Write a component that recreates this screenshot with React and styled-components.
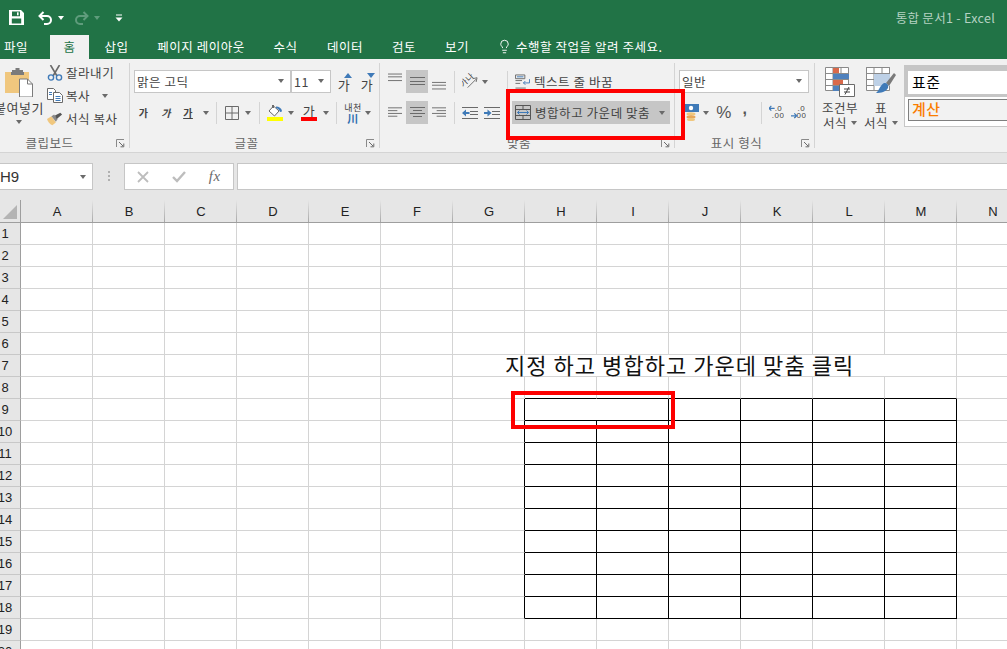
import React from "react";
import styled, { createGlobalStyle } from "styled-components";
import { Lightbulb } from "lucide-react";

const GlobalStyle = createGlobalStyle`
  html, body { margin: 0; padding: 0; height: 100%; overflow: hidden; background: #fff; }
  #root { height: 100%; }
  * { box-sizing: border-box; }
`;

const Page = styled.div`
  position: relative;
  width: 1007px;
  height: 649px;
  overflow: hidden;
  font-family: "Noto Sans CJK KR", "Liberation Sans", sans-serif;
  font-size: 12px;
  letter-spacing: 0.55px;
  color: #444;
`;

/* title bar + tabs */
const TitleBar = styled.header`
  display: flex;
  align-items: center;
  height: 35px;
  padding: 0 12px 0 9px;
  background: #217346;
  color: #fff;
`;
const Qat = styled.div`
  display: flex;
  align-items: center;
  flex: 1;
`;
const QatSlot = styled.span`
  display: flex;
  align-items: center;
  justify-content: center;
  flex: none;
  width: ${(p) => p.$w}px;
  margin-left: ${(p) => p.$ml || 0}px;
`;
const Title = styled.div`
  color: #b5d2c2;
  font-size: 12.5px;
  letter-spacing: 0.3px;
`;
const TabBar = styled.nav`
  display: flex;
  height: 24px;
  background: #217346;
`;
const Tab = styled.div`
  display: flex;
  align-items: center;
  justify-content: center;
  flex: none;
  width: ${(p) => p.$w}px;
  margin-left: ${(p) => p.$ml || 0}px;
  padding-bottom: 2px;
  font-size: 12.5px;
  color: ${(p) => (p.$active ? "#217346" : "#fff")};
  background: ${(p) => (p.$active ? "#f1f1f1" : "transparent")};
`;
const TellMe = styled.div`
  display: flex;
  align-items: center;
  gap: 4px;
  margin-left: 14px;
  padding-bottom: 2px;
  color: #fff;
  font-size: 12.5px;
`;

/* ribbon */
const Ribbon = styled.div`
  display: flex;
  height: 94px;
  padding-top: 4px;
  background: #f1f1f1;
  border-bottom: 1px solid #d4d4d4;
`;
const Group = styled.section`
  position: relative;
  display: flex;
  flex-direction: column;
  flex: none;
  width: ${(p) => p.$w}px;
  height: 85px;
  border-right: ${(p) => (p.$last ? "none" : "1px solid #d4d4d4")};
`;
const GroupBody = styled.div`
  flex: 1;
  min-height: 0;
  display: ${(p) => (p.$row ? "flex" : "block")};
  padding-top: ${(p) => (p.$row ? 0 : 7)}px;
`;
const GroupLabel = styled.div`
  height: 15px;
  margin-bottom: -2px;
  line-height: 15px;
  text-align: center;
  color: #666;
  font-size: 12.5px;
  padding-right: ${(p) => p.$pr ?? 16}px;
`;
const Launcher = styled.svg`
  position: absolute;
  right: 4px;
  bottom: 0;
`;
const Row = styled.div`
  display: flex;
  align-items: center;
  height: 23px;
  margin-bottom: 8px;
`;
const Slot = styled.span`
  display: flex;
  align-items: center;
  justify-content: center;
  flex: none;
  height: 100%;
  width: ${(p) => p.$w}px;
  margin-left: ${(p) => p.$ml || 0}px;
  background: ${(p) => (p.$on ? "#c6c6c6" : "transparent")};
  color: #444;
`;
const Sep = styled.span`
  flex: none;
  width: 1px;
  height: 22px;
  margin-left: ${(p) => p.$ml || 0}px;
  background: #d4d4d4;
`;
const Caret = styled.i`
  display: inline-block;
  flex: none;
  width: 0;
  height: 0;
  margin-left: ${(p) => p.$ml || 0}px;
  border-left: 3.5px solid transparent;
  border-right: 3.5px solid transparent;
  border-top: 4px solid ${(p) => p.$color || "#6a6a6a"};
`;
const Select = styled.div`
  display: flex;
  align-items: center;
  justify-content: space-between;
  flex: none;
  width: ${(p) => p.$w}px;
  height: 23px;
  margin-left: ${(p) => p.$ml || 0}px;
  padding: 0 6px 1px 2px;
  background: #fff;
  border: 1px solid #c6c6c6;
  color: #444;
  font-size: 12.5px;
`;

/* clipboard group */
const PasteCol = styled.div`
  display: flex;
  flex-direction: column;
  align-items: center;
  flex: none;
  width: 38px;
  padding-top: 5px;
`;
const PasteLabel = styled.div`
  margin-top: 3px;
  height: 15px;
  line-height: 15px;
  white-space: nowrap;
  font-size: 13px;
`;
const PasteCaret = styled.div`
  display: flex;
  margin-top: 5px;
`;
const SmallCol = styled.div`
  margin: -2px 0 0 9px;
`;
const SmallRow = styled.div`
  display: flex;
  align-items: center;
  height: 23px;
  gap: 3px;
  font-size: 12.5px;
  white-space: nowrap;
`;
const SmallIcon = styled.span`
  display: flex;
  justify-content: center;
  flex: none;
  width: 16px;
`;

/* font group */
const Ga = styled.span`
  font-size: ${(p) => p.$size || 10}px;
  font-weight: ${(p) => (p.$bold ? 700 : 400)};
  font-style: ${(p) => (p.$italic ? "italic" : "normal")};
  text-decoration: ${(p) => (p.$under ? "underline" : "none")};
  line-height: 1;
`;
const GrowWrap = styled.span`
  position: relative;
  display: flex;
  font-size: 13px;
  line-height: 1;
  padding-top: 5px;
`;
const GrowMark = styled.svg`
  position: absolute;
  top: 0;
  right: -2px;
`;
const ColorWrap = styled.span`
  display: flex;
  flex-direction: column;
  align-items: center;
  width: 16px;
`;
const ColorBar = styled.span`
  display: block;
  width: 16px;
  height: 4px;
  background: ${(p) => p.$color};
`;
const ColorGa = styled.span`
  font-size: 13px;
  line-height: 12px;
  height: 12px;
`;
const Phonetic = styled.span`
  display: flex;
  flex-direction: column;
  align-items: center;
  font-size: 9px;
  line-height: 10px;
`;
const PhoneticMark = styled.span`
  color: #2f6fb0;
  font-size: 11px;
  font-weight: 700;
  line-height: 10px;
`;

/* alignment group */
const WrapLabel = styled.span`
  margin-left: 4px;
  padding-bottom: 1px;
  font-size: 12.5px;
  white-space: nowrap;
`;
const MergeButton = styled.div`
  display: flex;
  align-items: center;
  flex: none;
  width: 158px;
  height: 23px;
  margin-left: 12px;
  padding-left: 3px;
  background: #c6c6c6;
  font-size: 12.5px;
  white-space: nowrap;
`;
const MergeText = styled.span`
  margin-left: 4px;
  flex: 1;
`;
const MergeCaret = styled.span`
  display: flex;
  margin-right: 5px;
`;

/* number group */
const Symbol = styled.span`
  font-family: "Liberation Sans", sans-serif;
  font-weight: ${(p) => p.$weight || 400};
  font-size: ${(p) => p.$size || 16}px;
  line-height: 1;
  padding-bottom: ${(p) => p.$pb || 0}px;
  color: #555;
`;

/* styles group */
const BigButton = styled.div`
  display: flex;
  flex-direction: column;
  align-items: center;
  flex: none;
  width: 40px;
  margin-left: ${(p) => p.$ml || 0}px;
  padding-top: 4px;
`;
const BigLabel = styled.div`
  display: flex;
  align-items: center;
  gap: 4px;
  height: 15px;
  line-height: 15px;
  font-size: 12.5px;
  white-space: nowrap;
  margin-top: ${(p) => p.$mt || 0}px;
`;
const Gallery = styled.div`
  flex: 1;
  height: 62px;
  margin: 2px 0 0 3px;
  background: #fff;
  border: 1px solid #c6c6c6;
  border-right: none;
`;
const StyleNormal = styled.div`
  display: flex;
  align-items: center;
  height: 31px;
  padding: 0 0 3px 4px;
  background: #fff;
  border: solid #c6c6c6;
  border-width: 5px 0 3px 3px;
  font-size: 15px;
  color: #000;
`;
const StyleCalc = styled.div`
  display: flex;
  align-items: center;
  height: 22px;
  margin: 2px 0 0 3px;
  padding: 0 0 3px 3px;
  background: #f2f2f2;
  border: 1px solid #7f7f7f;
  border-right: none;
  font-size: 15px;
  font-weight: 500;
  color: #fa7d00;
`;

/* formula bar */
const FormulaBar = styled.div`
  display: flex;
  align-items: flex-start;
  height: 47px;
  padding-top: 10px;
  background: #e6e6e6;
`;
const NameBox = styled.div`
  display: flex;
  align-items: center;
  justify-content: space-between;
  flex: none;
  width: 94px;
  height: 27px;
  margin-left: -1px;
  padding: 0 6px 0 0;
  background: #fff;
  border: 1px solid #c6c6c6;
  font-family: "Liberation Sans", sans-serif;
  font-size: 15px;
  letter-spacing: 0;
  color: #333;
`;
const Dots = styled.span`
  display: flex;
  flex-direction: column;
  gap: 2px;
  flex: none;
  margin: 8px 14px 0 15px;
  i {
    display: block;
    width: 2px;
    height: 2px;
    background: #b0b0b0;
  }
`;
const FxBox = styled.div`
  display: flex;
  align-items: center;
  justify-content: space-around;
  flex: none;
  width: 110px;
  height: 27px;
  background: #fff;
  border: 1px solid #c6c6c6;
  padding: 0 1px;
`;
const FxMark = styled.span`
  font-family: "Liberation Serif", serif;
  font-style: italic;
  font-size: 15px;
  color: #6a6a6a;
`;
const FormulaInput = styled.div`
  flex: 1;
  height: 27px;
  margin-left: 3px;
  background: #fff;
  border: 1px solid #c6c6c6;
  border-right: none;
`;

/* sheet */
const Sheet = styled.div`
  display: grid;
  grid-template-columns: 21px repeat(14, 72px);
  grid-template-rows: 23px;
  grid-auto-rows: 22px;
  height: 449px;
  overflow: hidden;
  background: #fff;
  font-family: "Liberation Sans", sans-serif;
  font-size: 13px;
  letter-spacing: 0;
  color: #222;
`;
const Corner = styled.div`
  display: flex;
  align-items: flex-end;
  padding: 0 0 3px 3px;
  background: #e6e6e6;
  border-right: 1px solid #9e9e9e;
  border-bottom: 1px solid #9e9e9e;
`;
const ColHead = styled.div`
  display: flex;
  align-items: center;
  justify-content: center;
  background: linear-gradient(to bottom, #e6e6e6, #a8a8a8) right / 1px 100% no-repeat #e6e6e6;
  border-bottom: 1px solid #9e9e9e;
`;
const RowHead = styled.div`
  display: flex;
  align-items: center;
  justify-content: center;
  padding-right: 10px;
  background: #e6e6e6;
  border-right: 1px solid #9e9e9e;
  border-bottom: 1px solid #c8c8c8;
`;
const Cell = styled.div`
  grid-column: span ${(p) => p.$span || 1};
  border-right: 1px solid ${(p) => (p.$blackRight ? "#000" : "#d4d4d4")};
  border-bottom: 1px solid ${(p) => (p.$blackBottom ? "#000" : "#d4d4d4")};
`;
const NoteCell = styled(Cell)`
  display: flex;
  align-items: center;
  padding: 0 0 3px 52px;
  font-family: "Noto Sans CJK KR", sans-serif;
  font-size: 22px;
  letter-spacing: 1.05px;
  color: #111;
  white-space: nowrap;
  overflow: visible;
`;

/* red annotation boxes drawn over the capture */
const Callout = styled.div`
  position: absolute;
  left: ${(p) => p.$x}px;
  top: ${(p) => p.$y}px;
  width: ${(p) => p.$w}px;
  height: ${(p) => p.$h}px;
  border: 4px solid #fe0000;
  pointer-events: none;
`;

/* icons */
const GRAY = "#6a6a6a";
const BLUE = "#3f7ab8";

const SaveIcon = () => (
  <svg width="15" height="15" viewBox="0 0 15 15">
    <path fill="#fff" fillRule="evenodd" d="M0 0h12l3 3v12H0zM3 1.6v4.6h8V1.6zM2.8 8.6v4.8h9.4V8.6z" />
    <rect x="8" y="2.3" width="1.6" height="3" fill="#fff" />
  </svg>
);
const UndoIcon = ({ color = "#fff", flip }) => (
  <svg width="15" height="14" viewBox="0 0 15 14" style={flip ? { transform: "scaleX(-1)" } : undefined}>
    <path d="M5.5 1 1.5 5l4 4M1.5 5H9a4 4 0 0 1 0 8H6" fill="none" stroke={color} strokeWidth="2" />
  </svg>
);
const QatMenuIcon = () => (
  <svg width="8" height="8" viewBox="0 0 8 8">
    <path d="M1 1h6" stroke="#fff" strokeWidth="1" />
    <path d="M0.5 3.5h7L4 7.5z" fill="#fff" />
  </svg>
);
const LauncherIcon = () => (
  <Launcher width="9" height="9" viewBox="0 0 9 9">
    <path d="M0.5 8V0.5H8" fill="none" stroke="#8a8a8a" />
    <path d="M3 3l4 4M7.8 4.5v3.3H4.5" fill="none" stroke="#6a6a6a" />
  </Launcher>
);
const PasteIcon = () => (
  <svg width="28" height="29" viewBox="0 0 28 29">
    <path d="M0 4h24v21H0z" fill="#f0c77e" />
    <path d="M7 4V2h3.5V0h4v2H18v2h1v3H6V4z" fill="#7b7b7b" />
    <path d="M14.5 11h8l5 5v13h-13z" fill="#fff" stroke="#7b7b7b" />
    <path d="M22.5 11v5h5" fill="none" stroke="#7b7b7b" />
  </svg>
);
const CutIcon = () => (
  <svg width="16" height="16" viewBox="0 0 16 16">
    <path d="M3.5 0l6.5 11M12.5 0 6 11" stroke="#6a6a6a" strokeWidth="1.6" fill="none" />
    <circle cx="4" cy="12.5" r="2.6" fill="none" stroke={BLUE} strokeWidth="1.4" />
    <circle cx="12" cy="12.5" r="2.6" fill="none" stroke={BLUE} strokeWidth="1.4" />
  </svg>
);
const CopyIcon = () => (
  <svg width="16" height="15" viewBox="0 0 16 15">
    <path d="M.5.5h6l2 2v9H.5z" fill="#fff" stroke="#6a6a6a" />
    <path d="M6.5 4.5h6l3 3v7h-9z" fill="#fff" stroke="#6a6a6a" />
    <path d="M8.5 8.5h5M8.5 10.5h5M8.5 12.5h5M2 4.5h3M2 6.5h3" stroke={BLUE} />
  </svg>
);
const PainterIcon = () => (
  <svg width="18" height="14" viewBox="0 0 18 14">
    <path d="M0 7l5-3 5 7-4 3C3 13 1 10 0 7z" fill="#f0c77e" />
    <path d="M5 4l3-2 4 5-2 3z" fill="#8a8a8a" />
    <path d="M9 3l6-3 2 2-6 5z" fill="#555" />
  </svg>
);
const BorderIcon = () => (
  <svg width="14" height="14" viewBox="0 0 14 14">
    <path d="M.5.5h13v13H.5zM7 .5v13M.5 7h13" fill="none" stroke={GRAY} />
  </svg>
);
const FillIcon = () => (
  <svg width="16" height="12" viewBox="0 0 16 12">
    <path d="M6.5 1 12 6l-4.5 5L2 6z" fill="#fff" stroke={GRAY} />
    <path d="M5 0h2v3H5z" fill={GRAY} />
    <path d="M9 1.5c3 .2 5.5 1.5 6 4.500-.6 1.300-2 1.300-2.500 0C12 4.500 11 3.500 9 3.200z" fill={BLUE} />
  </svg>
);
const GrowArrow = ({ down }) => (
  <GrowMark width="8" height="5" viewBox="0 0 8 5">
    <path d={down ? "M0 0h8L4 5z" : "M4 0l4 5H0z"} fill={BLUE} />
  </GrowMark>
);
// lines are placed from the top of the 23px ribbon row
const Lines = ({ rows }) => (
  <svg width="15" height="23" viewBox="0 0 15 23">
    {rows.map(([x1, x2, y]) => (
      <path key={y} d={`M${x1} ${y + 0.5}H${x2}`} stroke={GRAY} />
    ))}
  </svg>
);
const vTop = [[0, 15, 3], [0, 15, 6], [0, 15, 10]];
const vMid = [[0, 15, 7], [0, 15, 11], [0, 15, 14]];
const vBot = [[0, 15, 12], [0, 15, 15], [0, 15, 19]];
const hLeft = [[0, 15, 6], [0, 10, 9], [0, 15, 12], [0, 10, 15]];
const hCenter = [[0, 15, 6], [3, 12, 9], [0, 15, 12], [3, 12, 15]];
const hRight = [[0, 15, 6], [5, 15, 9], [0, 15, 12], [5, 15, 15]];
const OrientIcon = () => (
  <svg width="17" height="17" viewBox="0 0 17 17">
    <text x="-1" y="11" fontSize="8.5" fill="#333" transform="rotate(-45 5 10)">가나</text>
    <path d="M6 15 15 6M11.500 5.500 16 4.500 15 9" fill="none" stroke={GRAY} />
  </svg>
);
const IndentIcon = ({ right }) => (
  <svg width="16" height="14" viewBox="0 0 16 14">
    <path d="M0 1.500h16M8 5.500h8M8 8.500h8M0 12.500h16" stroke={GRAY} />
    <path d={right ? "M0 6h3.500V3.500L7.500 7l-4 3.500V8H0z" : "M7.500 6H4V3.500L0 7l4 3.500V8h3.500z"} fill={BLUE} />
  </svg>
);
const WrapIcon = () => (
  <svg width="16" height="15" viewBox="0 0 16 15">
    <path d="M.5.5h10v4H.5zM.5 6.500h7M.5 9.500h5M.5 14.500h11" fill="none" stroke={GRAY} />
    <path d="M2 2.500h7" stroke={BLUE} />
    <path d="M15.500 5v4H9M11 7 9 9l2 2" fill="none" stroke={BLUE} />
  </svg>
);
const MergeIcon = () => (
  <svg width="16" height="15" viewBox="0 0 16 15">
    <path d="M.5.500h15v14H.5zM.5 4.500h15M.5 10.500h15M8 .5v4M8 10.500v4" fill="none" stroke="#555" />
    <path d="M2.500 7.500h11M4.500 5.500l-2 2 2 2M11.500 5.500l2 2-2 2" fill="none" stroke={BLUE} />
  </svg>
);
const AccountingIcon = () => (
  <svg width="15" height="17" viewBox="0 0 15 17">
    <path d="M0 0h15v8H0z" fill={BLUE} />
    <circle cx="7" cy="4" r="2.200" fill="#fff" />
    <ellipse cx="7" cy="10" rx="4.500" ry="1.700" fill="#f0c77e" />
    <ellipse cx="7" cy="13" rx="4.500" ry="1.700" fill="#e8a85a" />
    <ellipse cx="7" cy="15.500" rx="4" ry="1.500" fill="#f0c77e" />
  </svg>
);
const DecimalIcon = ({ more }) => (
  <svg width="16" height="15" viewBox="0 0 16 15">
    <text x={more ? 6 : 3} y={more ? 6 : 13} fontSize="8.500" fill="#444" fontFamily="Liberation Sans">{more ? ".0" : ".00"}</text>
    <text x={more ? 3 : 7} y={more ? 13 : 6} fontSize="8.500" fill="#444" fontFamily="Liberation Sans">{more ? ".00" : ".0"}</text>
    <path d={more ? "M6 3H0M2.500.5 0 3l2.500 2.500" : "M0 11h6M3.500 8.500 6 11l-2.500 2.500"} fill="none" stroke={BLUE} strokeWidth="1.300" />
  </svg>
);
const gridPath = "M.5.500h23v23H.5zM.5 6.500h23M.5 12.500h23M.5 18.500h23M8 .5v23M16 .5v23";
const CondIcon = () => (
  <svg width="30" height="30" viewBox="0 0 30 30">
    <path d={gridPath} fill="#fff" stroke="#8a8a8a" />
    <path d="M8 1h6v5H8z" fill="#d9694a" />
    <path d="M8 7h16v5H8z" fill="#4f81bd" />
    <path d="M8 13h10v5H8z" fill="#d9694a" />
    <path d="M8 19h6v5H8z" fill="#4f81bd" />
    <path d="M14.500 17.500h15v12h-15z" fill="#fff" stroke="#6a6a6a" />
    <path d="M19 22h6M19 25h6M24 20l-4 7.500" fill="none" stroke="#444" />
  </svg>
);
const TableStyleIcon = () => (
  <svg width="30" height="30" viewBox="0 0 30 30">
    <path d={gridPath} fill="#fff" stroke="#8a8a8a" />
    <path d="M8 7h16v12H8z" fill="#bdd0e6" />
    <path d="M.5.500h23v6H.5z" fill="none" stroke="#8a8a8a" />
    <path d="M20 16 28 6l2 2-7 11z" fill="#7a7a7a" />
    <path d="M18 16c3 0 5 2 4 5-2 4-7 5-12 5 3-2 4-8 8-10z" fill={BLUE} />
  </svg>
);
const CornerMark = () => (
  <svg width="14" height="14" viewBox="0 0 14 14">
    <path d="M14 0v14H0z" fill="#b4b4b4" />
  </svg>
);
const CancelIcon = () => (
  <svg width="12" height="12" viewBox="0 0 12 12">
    <path d="M1 1l10 10M11 1 1 11" stroke="#bdbdbd" strokeWidth="1.800" />
  </svg>
);
const CheckIcon = () => (
  <svg width="14" height="12" viewBox="0 0 14 12">
    <path d="M1 6l4 4 8-9" fill="none" stroke="#bdbdbd" strokeWidth="2.400" />
  </svg>
);

const COLUMNS = "ABCDEFGHIJKLMN".split("");
const ROWS = Array.from({ length: 20 }, (_, i) => i + 1);
const G = 6;
const H = 7;
const M = 12;
const NOTE = "지정 하고 병합하고 가운데 맞춤 클릭";

function renderRow(row) {
  const cells = [];
  COLUMNS.forEach((_, col) => {
    // the note in row 7 runs over its neighbours, H9:I9 is merged
    if (row === 7 && col > G && col <= M) return;
    if (row === 9 && col === H + 1) return;
    if (row === 7 && col === G) {
      cells.push(<NoteCell key={col} $span={7}>{NOTE}</NoteCell>);
      return;
    }
    const inRows = row >= 9 && row <= 18;
    cells.push(
      <Cell
        key={col}
        $span={row === 9 && col === H ? 2 : 1}
        $blackRight={inRows && col >= G && col <= M}
        $blackBottom={row >= 8 && row <= 18 && col >= H && col <= M}
      />
    );
  });
  return cells;
}

export default function App() {
  return (
    <Page>
      <GlobalStyle />
      <TitleBar>
        <Qat>
          <SaveIcon />
          <QatSlot $w={15} $ml={14}><UndoIcon /></QatSlot>
          <QatSlot $w={8} $ml={4}><Caret $color="#fff" /></QatSlot>
          <QatSlot $w={15} $ml={9}><UndoIcon color="#5f9c7c" flip /></QatSlot>
          <QatSlot $w={8} $ml={4}><Caret $color="#5f9c7c" /></QatSlot>
          <QatSlot $w={8} $ml={14}><QatMenuIcon /></QatSlot>
        </Qat>
        <Title>통합 문서1 - Excel</Title>
      </TitleBar>
      <TabBar>
        <Tab $w={32}>파일</Tab>
        <Tab $w={39} $ml={18} $active>홈</Tab>
        <Tab $w={55}>삽입</Tab>
        <Tab $w={114}>페이지 레이아웃</Tab>
        <Tab $w={55}>수식</Tab>
        <Tab $w={64}>데이터</Tab>
        <Tab $w={54}>검토</Tab>
        <Tab $w={52}>보기</Tab>
        <TellMe>
          <Lightbulb size={15} strokeWidth={1.5} />
          수행할 작업을 알려 주세요.
        </TellMe>
      </TabBar>

      <Ribbon>
        <Group $w={130}>
          <GroupBody $row>
            <PasteCol>
              <PasteIcon />
              <PasteLabel>붙여넣기</PasteLabel>
              <PasteCaret><Caret /></PasteCaret>
            </PasteCol>
            <SmallCol>
              <SmallRow><SmallIcon><CutIcon /></SmallIcon>잘라내기</SmallRow>
              <SmallRow><SmallIcon><CopyIcon /></SmallIcon>복사<Caret $ml={9} /></SmallRow>
              <SmallRow><SmallIcon><PainterIcon /></SmallIcon>서식 복사</SmallRow>
            </SmallCol>
          </GroupBody>
          <GroupLabel $pr={30}>클립보드</GroupLabel>
          <LauncherIcon />
        </Group>

        <Group $w={250}>
          <GroupBody>
            <Row>
              <Select $w={157} $ml={4}>맑은 고딕<Caret /></Select>
              <Select $w={40}>11<Caret /></Select>
              <Slot $w={16} $ml={5}><GrowWrap>가<GrowArrow /></GrowWrap></Slot>
              <Slot $w={16} $ml={7}><GrowWrap>가<GrowArrow down /></GrowWrap></Slot>
            </Row>
            <Row>
              <Slot $w={21} $ml={3}><Ga $bold>가</Ga></Slot>
              <Slot $w={24}><Ga $bold $italic>가</Ga></Slot>
              <Slot $w={20}><Ga $bold $under>가</Ga></Slot>
              <Slot $w={16}><Caret /></Slot>
              <Sep $ml={2} />
              <Slot $w={24} $ml={3}><BorderIcon /></Slot>
              <Slot $w={8}><Caret /></Slot>
              <Sep $ml={7} />
              <Slot $w={20} $ml={5}>
                <ColorWrap><FillIcon /><ColorBar $color="#ffff00" /></ColorWrap>
              </Slot>
              <Slot $w={8} $ml={2}><Caret /></Slot>
              <Slot $w={20} $ml={4}>
                <ColorWrap><ColorGa>가</ColorGa><ColorBar $color="#ff0000" /></ColorWrap>
              </Slot>
              <Slot $w={8} $ml={3}><Caret /></Slot>
              <Sep $ml={6} />
              <Slot $w={20} $ml={6}>
                <Phonetic>내천<PhoneticMark>川</PhoneticMark></Phonetic>
              </Slot>
              <Slot $w={8} $ml={1}><Caret /></Slot>
            </Row>
          </GroupBody>
          <GroupLabel>글꼴</GroupLabel>
          <LauncherIcon />
        </Group>

        <Group $w={295}>
          <GroupBody>
            <Row>
              <Slot $w={14} $ml={8}><Lines rows={vTop} /></Slot>
              <Slot $w={22} $ml={4} $on><Lines rows={vMid} /></Slot>
              <Slot $w={14} $ml={4}><Lines rows={vBot} /></Slot>
              <Sep $ml={8} />
              <Slot $w={16} $ml={7}><OrientIcon /></Slot>
              <Slot $w={7} $ml={3}><Caret /></Slot>
              <Sep $ml={19} />
              <Slot $w={15} $ml={7}><WrapIcon /></Slot>
              <WrapLabel>텍스트 줄 바꿈</WrapLabel>
            </Row>
            <Row>
              <Slot $w={14} $ml={8}><Lines rows={hLeft} /></Slot>
              <Slot $w={22} $ml={4} $on><Lines rows={hCenter} /></Slot>
              <Slot $w={14} $ml={4}><Lines rows={hRight} /></Slot>
              <Sep $ml={8} />
              <Slot $w={16} $ml={7}><IndentIcon /></Slot>
              <Slot $w={16} $ml={6}><IndentIcon right /></Slot>
              <MergeButton>
                <MergeIcon />
                <MergeText>병합하고 가운데 맞춤</MergeText>
                <MergeCaret><Caret /></MergeCaret>
              </MergeButton>
            </Row>
          </GroupBody>
          <GroupLabel>맞춤</GroupLabel>
          <LauncherIcon />
        </Group>

        <Group $w={140}>
          <GroupBody>
            <Row>
              <Select $w={130} $ml={4}>일반<Caret /></Select>
            </Row>
            <Row>
              <Slot $w={15} $ml={9}><AccountingIcon /></Slot>
              <Slot $w={8} $ml={3}><Caret /></Slot>
              <Slot $w={16} $ml={6}><Symbol $size={17}>%</Symbol></Slot>
              <Slot $w={16} $ml={5}><Symbol $size={16} $weight={700} $pb={7}>,</Symbol></Slot>
              <Sep $ml={8} />
              <Slot $w={15} $ml={7}><DecimalIcon more /></Slot>
              <Slot $w={15} $ml={7}><DecimalIcon /></Slot>
            </Row>
          </GroupBody>
          <GroupLabel>표시 형식</GroupLabel>
          <LauncherIcon />
        </Group>

        <Group $w={192} $last>
          <GroupBody $row>
            <BigButton $ml={5}>
              <CondIcon />
              <BigLabel $mt={3}>조건부</BigLabel>
              <BigLabel>서식<Caret /></BigLabel>
            </BigButton>
            <BigButton $ml={1}>
              <TableStyleIcon />
              <BigLabel $mt={3}>표</BigLabel>
              <BigLabel>서식<Caret /></BigLabel>
            </BigButton>
            <Gallery>
              <StyleNormal>표준</StyleNormal>
              <StyleCalc>계산</StyleCalc>
            </Gallery>
          </GroupBody>
        </Group>
      </Ribbon>

      <FormulaBar>
        <NameBox>H9<Caret /></NameBox>
        <Dots><i /><i /><i /></Dots>
        <FxBox>
          <CancelIcon />
          <CheckIcon />
          <FxMark>fx</FxMark>
        </FxBox>
        <FormulaInput />
      </FormulaBar>

      <Sheet>
        <Corner><CornerMark /></Corner>
        {COLUMNS.map((c) => <ColHead key={c}>{c}</ColHead>)}
        {ROWS.map((row) => (
          <React.Fragment key={row}>
            <RowHead>{row}</RowHead>
            {renderRow(row)}
          </React.Fragment>
        ))}
      </Sheet>

      <Callout $x={506} $y={89} $w={179} $h={51} />
      <Callout $x={511} $y={391} $w={164} $h={38} />
    </Page>
  );
}
